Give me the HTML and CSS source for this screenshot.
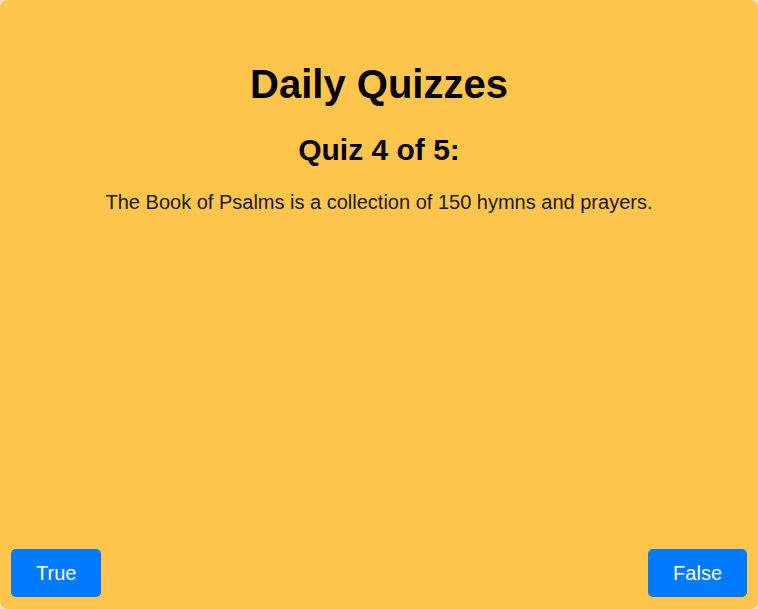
FILE: index.html
```html
<!DOCTYPE html>
<html>
<head>
<meta charset="utf-8">
<link rel="stylesheet" href="styles.css">
</head>
<body>
<div class="card">
  <div class="content">
    <h1 class="title">Daily Quizzes</h1>
    <h2 class="subtitle">Quiz 4 of 5:</h2>
    <p class="question">The Book of Psalms is a collection of 150 hymns and prayers.</p>
  </div>
  <div class="actions">
    <button class="btn">True</button>
    <button class="btn">False</button>
  </div>
</div>
</body>
</html>
```
FILE: styles.css
```css
html, body {
  margin: 0;
  padding: 0;
  height: 100%;
  background: #e8e2d2;
}
.card {
  box-sizing: border-box;
  height: 609px;
  background: #ffc54d;
  border-radius: 8px;
  display: flex;
  flex-direction: column;
  justify-content: space-between;
  padding: 0 11px 12px 11px;
  font-family: "Liberation Sans", Arial, sans-serif;
  color: #000;
}
.content {
  text-align: center;
}
.title {
  font-size: 40px;
  font-weight: bold;
  margin: 61px 0 0;
  line-height: 46px;
}
.subtitle {
  font-size: 30px;
  font-weight: bold;
  margin: 26px 0 0;
  line-height: 34px;
}
.question {
  font-size: 20px;
  margin: 24px 0 0;
  line-height: 23px;
  color: #1a1a1a;
}
.actions {
  display: flex;
  justify-content: space-between;
  align-items: flex-end;
}
.btn {
  font-family: "Liberation Sans", Arial, sans-serif;
  font-size: 20px;
  line-height: 24px;
  color: #fff;
  background: #007bff;
  border: none;
  border-radius: 5px;
  padding: 12px 25px;
}
```
